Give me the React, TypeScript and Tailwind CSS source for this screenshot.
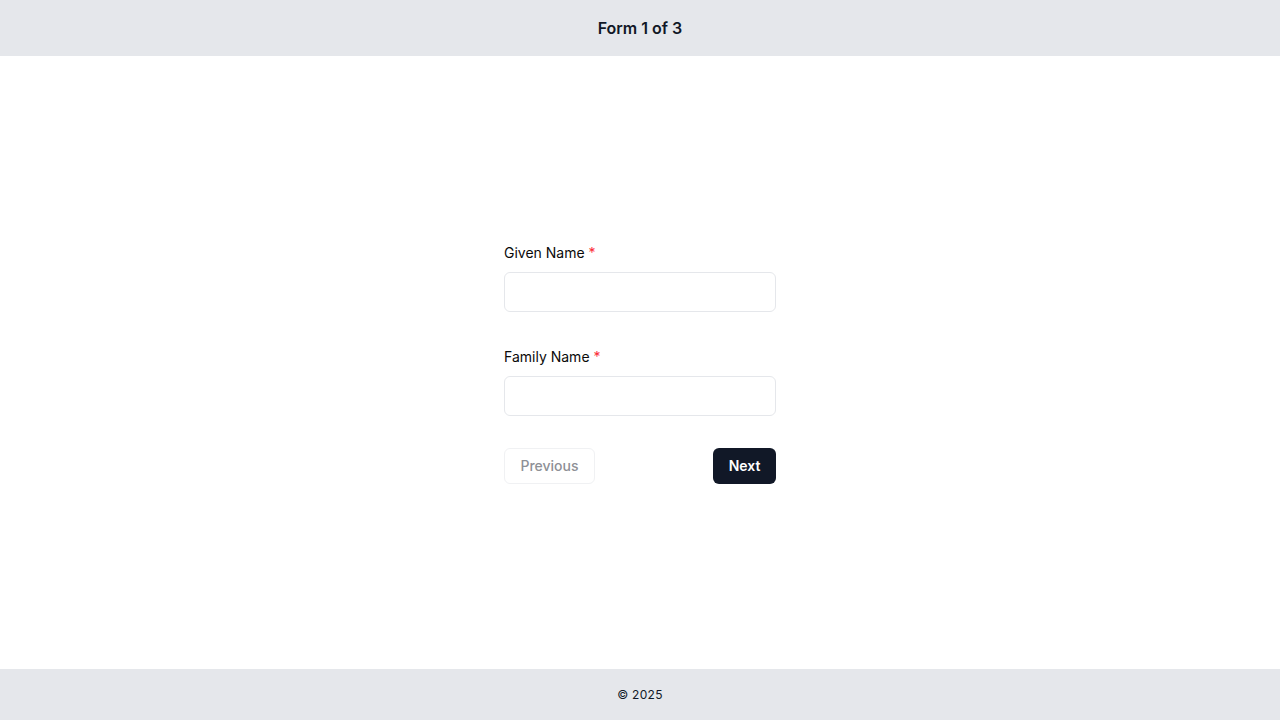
export default function App() {
  return (
    <div className="flex h-[720px] flex-col bg-white text-[#111827]" style={{ fontFamily: 'Inter, "Noto Sans", sans-serif' }}>
      <header className="flex h-14 shrink-0 items-center justify-center bg-[#e5e7eb]">
        <h1 className="text-base font-semibold text-[#111827]">Form 1 of 3</h1>
      </header>
      <main className="flex flex-1 items-center justify-center">
        <form className="mt-[2px] flex w-[272px] flex-col" onSubmit={(e) => e.preventDefault()}>
          <div className="flex flex-col">
            <label className="mb-[9px] text-sm leading-5 text-[#0a0a0a]">
              Given Name <span className="text-red-500">*</span>
            </label>
            <input className="h-10 w-full rounded-md border border-[#e5e7eb] bg-white px-3 text-sm outline-none" />
          </div>
          <div className="mt-[35px] flex flex-col">
            <label className="mb-[9px] text-sm leading-5 text-[#0a0a0a]">
              Family Name <span className="text-red-500">*</span>
            </label>
            <input className="h-10 w-full rounded-md border border-[#e5e7eb] bg-white px-3 text-sm outline-none" />
          </div>
          <div className="mt-8 flex items-center justify-between">
            <button type="button" disabled className="h-9 w-[91px] rounded-md border border-[#f0f1f3] bg-white text-sm font-medium text-[#8e9096]">
              Previous
            </button>
            <button type="submit" className="h-9 w-[63px] rounded-md bg-[#111827] text-sm font-semibold text-white">
              Next
            </button>
          </div>
        </form>
      </main>
      <footer className="flex h-[51px] shrink-0 items-center justify-center bg-[#e5e7eb]">
        <p className="text-xs tracking-wide text-[#111827]">© 2025</p>
      </footer>
    </div>
  );
}
